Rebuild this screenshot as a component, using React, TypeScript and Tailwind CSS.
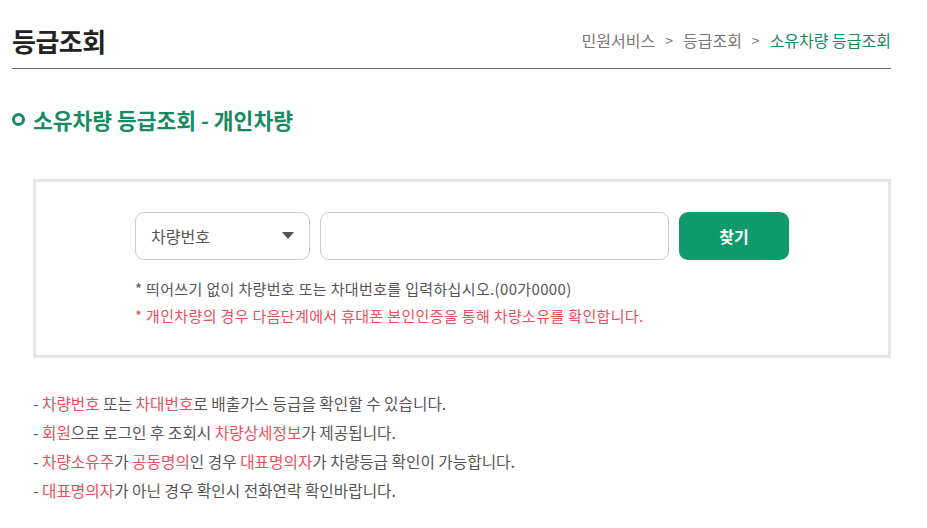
import React from "react";

const font = { fontFamily: '"Noto Sans CJK KR", "Noto Sans", sans-serif' };

function Red({ children }: { children: React.ReactNode }) {
  return <span className="text-[#e8505b]">{children}</span>;
}

export default function App() {
  return (
    <div className="w-[927px] h-[528px] bg-white overflow-hidden" style={font}>
      <div className="w-[879px] ml-3">
        {/* header */}
        <div className="flex items-end justify-between h-[69px] pb-[14px] border-b border-[#666]">
          <h1 className="text-[26px] font-bold text-[#222] leading-none tracking-[-0.5px]">등급조회</h1>
          <div className="flex items-center gap-[10px] text-[16px] text-[#777] leading-none pb-[6px]">
            <span>민원서비스</span>
            <span className="text-[14px]">&gt;</span>
            <span>등급조회</span>
            <span className="text-[14px]">&gt;</span>
            <span className="text-[#178a62]">소유차량 등급조회</span>
          </div>
        </div>

        {/* section title */}
        <div className="flex items-center gap-[8px] mt-[40px]">
          <span className="w-[13px] h-[13px] rounded-full border-[3px] border-[#178a62]" />
          <h2 className="text-[21.5px] font-bold text-[#178a62] leading-none">
            소유차량 등급조회 - 개인차량
          </h2>
        </div>

        {/* search box */}
        <div className="ml-[21px] mt-[48px] w-[858px] h-[179px] border-[3px] border-[#e6e6e6] pl-[99px] pt-[30px]">
          <div className="flex gap-[10px]">
            <div className="w-[175px] h-[48px] rounded-[9px] border border-[#ccc] flex items-center justify-between pl-[15px] pr-[15px]">
              <span className="text-[16px] text-[#555]">차량번호</span>
              <svg width="12" height="7" viewBox="0 0 12 7">
                <path d="M0 0 H12 L6 7 Z" fill="#555" />
              </svg>
            </div>
            <div className="w-[349px] h-[48px] rounded-[9px] border border-[#ccc]" />
            <button className="w-[110px] h-[48px] rounded-[9px] bg-[#109a6c] text-white text-[16px] font-bold">
              찾기
            </button>
          </div>
          <p className="mt-[15px] text-[15px] text-[#555] leading-[27px] tracking-[0.35px]">
            * 띄어쓰기 없이 차량번호 또는 차대번호를 입력하십시오.(00가0000)
          </p>
          <p className="text-[15px] text-[#e8505b] leading-[27px] tracking-[0.35px]">
            * 개인차량의 경우 다음단계에서 휴대폰 본인인증을 통해 차량소유를 확인합니다.
          </p>
        </div>

        {/* notes */}
        <ul className="ml-[21px] mt-[31px] text-[15.7px] text-[#555] leading-[29px]">
          <li>- <Red>차량번호</Red> 또는 <Red>차대번호</Red>로 배출가스 등급을 확인할 수 있습니다.</li>
          <li>- <Red>회원</Red>으로 로그인 후 조회시 <Red>차량상세정보</Red>가 제공됩니다.</li>
          <li>- <Red>차량소유주</Red>가 <Red>공동명의</Red>인 경우 <Red>대표명의자</Red>가 차량등급 확인이 가능합니다.</li>
          <li>- <Red>대표명의자</Red>가 아닌 경우 확인시 전화연락 확인바랍니다.</li>
        </ul>
      </div>
    </div>
  );
}
